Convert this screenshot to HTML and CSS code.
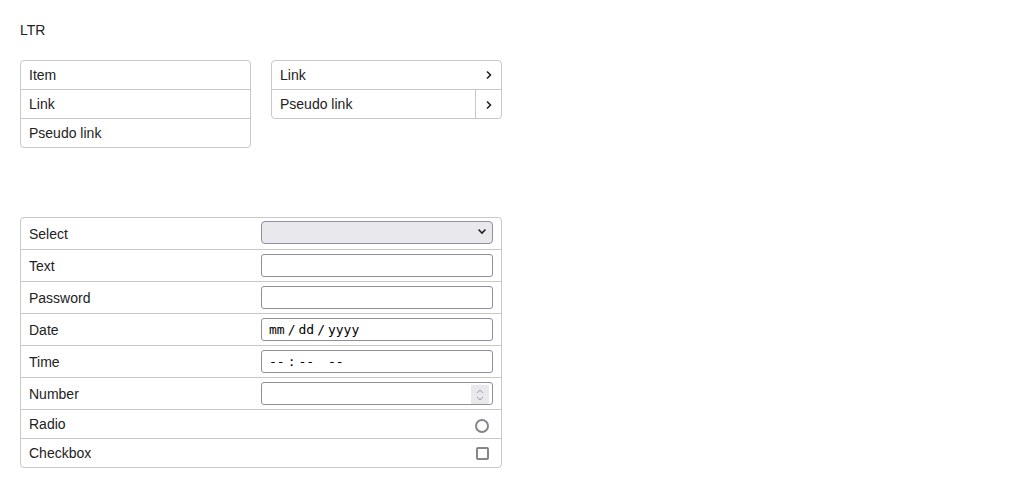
FILE: index.html
```html
<!DOCTYPE html>
<html>
<head>
<meta charset="utf-8">
<link rel="stylesheet" href="styles.css">
</head>
<body>
<div class="page">
  <div class="title">LTR</div>
  <div class="lists">
    <ul class="list">
      <li class="row">Item</li>
      <li class="row">Link</li>
      <li class="row">Pseudo link</li>
    </ul>
    <ul class="list">
      <li class="row nav">
        <span class="label">Link</span>
        <span class="chev"><svg width="8" height="10" viewBox="0 0 8 10"><path d="M2 1.5 L5.5 5 L2 8.5" fill="none" stroke="#222" stroke-width="1.6"/></svg></span>
      </li>
      <li class="row nav split">
        <span class="label">Pseudo link</span>
        <span class="chev cell"><svg width="8" height="10" viewBox="0 0 8 10"><path d="M2 1.5 L5.5 5 L2 8.5" fill="none" stroke="#222" stroke-width="1.6"/></svg></span>
      </li>
    </ul>
  </div>
  <ul class="list form">
    <li class="frow tall"><span class="flabel">Select</span><span class="fctl"><select class="sel"><option></option></select><span class="selarrow"><svg width="10" height="8" viewBox="0 0 10 8"><path d="M1.5 2.5 L5 6 L8.5 2.5" fill="none" stroke="#222" stroke-width="1.6"/></svg></span></span></li>
    <li class="frow tall"><span class="flabel">Text</span><span class="fctl"><input class="inp" type="text"></span></li>
    <li class="frow tall"><span class="flabel">Password</span><span class="fctl"><input class="inp" type="password"></span></li>
    <li class="frow tall"><span class="flabel">Date</span><span class="fctl"><input class="inp mono" type="date"></span></li>
    <li class="frow tall"><span class="flabel">Time</span><span class="fctl"><input class="inp mono" type="time"></span></li>
    <li class="frow tall"><span class="flabel">Number</span><span class="fctl"><input class="inp num" type="number"><span class="spin"><svg width="10" height="14" viewBox="0 0 10 14"><path d="M2 5 L5 2 L8 5 M2 9 L5 12 L8 9" fill="none" stroke="#9a9aa2" stroke-width="1"/></svg></span></span></li>
    <li class="frow"><span class="flabel">Radio</span><span class="fctl end"><span class="radio"></span></span></li>
    <li class="frow"><span class="flabel">Checkbox</span><span class="fctl end"><span class="check"></span></span></li>
  </ul>
</div>
</body>
</html>
```

FILE: styles.css
```css
html, body {
  margin: 0;
  padding: 0;
  background: #fff;
}
body {
  font-family: "Liberation Sans", Arial, sans-serif;
  font-size: 14px;
  color: #222;
}
.page {
  padding: 20px;
}
.title {
  height: 20px;
  line-height: 20px;
  margin-bottom: 20px;
}
.lists {
  display: flex;
  gap: 20px;
  align-items: flex-start;
}
.list {
  list-style: none;
  margin: 0;
  padding: 0;
  width: 229px;
  border: 1px solid #c8c8c8;
  border-radius: 4px;
}
.row {
  height: 28px;
  line-height: 28px;
  padding-left: 8px;
  border-top: 1px solid #c8c8c8;
}
.row:first-child {
  border-top: none;
}
.nav {
  display: flex;
  justify-content: space-between;
  align-items: stretch;
  padding-right: 0;
}
.chev {
  width: 25px;
  display: flex;
  align-items: center;
  justify-content: center;
  padding-left: 1px;
}
.chev svg {
  display: block;
}
.chev.cell {
  border-left: 1px solid #c8c8c8;
  padding-left: 0;
  padding-top: 2px;
}
.form {
  width: 480px;
  margin-top: 69px;
}
.frow {
  display: grid;
  grid-template-columns: 1fr 1fr;
  height: 28px;
  border-top: 1px solid #c8c8c8;
}
.frow:first-child {
  border-top: none;
}
.frow.tall {
  height: 31px;
}
.flabel {
  padding-left: 8px;
  display: flex;
  align-items: center;
}
.fctl {
  padding-right: 8px;
  display: flex;
  align-items: center;
  position: relative;
}
.fctl.end {
  justify-content: flex-end;
}
.sel, .inp {
  box-sizing: border-box;
  width: 232px;
  height: 23px;
  margin: 0;
  border: 1px solid #8f8f9d;
  border-radius: 3px;
  background: #fff;
  font-family: "DejaVu Sans Mono", monospace;
  font-size: 13px;
  color: #000;
  padding: 0 6px;
}
.sel {
  -webkit-appearance: none;
  appearance: none;
  background: #e9e9ed;
  border-radius: 4px;
  margin-top: -3px;
}
.selarrow {
  position: absolute;
  right: 14px;
  top: 9px;
  display: flex;
  pointer-events: none;
}
.inp::-webkit-calendar-picker-indicator {
  display: none;
}
.inp::-webkit-datetime-edit-text {
  padding: 0 2px;
}
.inp::-webkit-datetime-edit {
  padding: 0;
}
.inp.num {
  -moz-appearance: textfield;
}
.inp.num::-webkit-inner-spin-button,
.inp.num::-webkit-outer-spin-button {
  -webkit-appearance: none;
  margin: 0;
}
.spin {
  position: absolute;
  right: 12px;
  top: 7px;
  width: 18px;
  height: 19px;
  background: #e9e9ed;
  display: flex;
  align-items: center;
  justify-content: center;
}
.radio {
  box-sizing: border-box;
  width: 14px;
  height: 14px;
  border: 2px solid #858590;
  border-radius: 50%;
  margin-right: 4px;
  margin-top: 4px;
}
.check {
  box-sizing: border-box;
  width: 13px;
  height: 13px;
  border: 2px solid #858590;
  border-radius: 2px;
  margin-right: 4px;
  margin-top: 0px;
}
```
